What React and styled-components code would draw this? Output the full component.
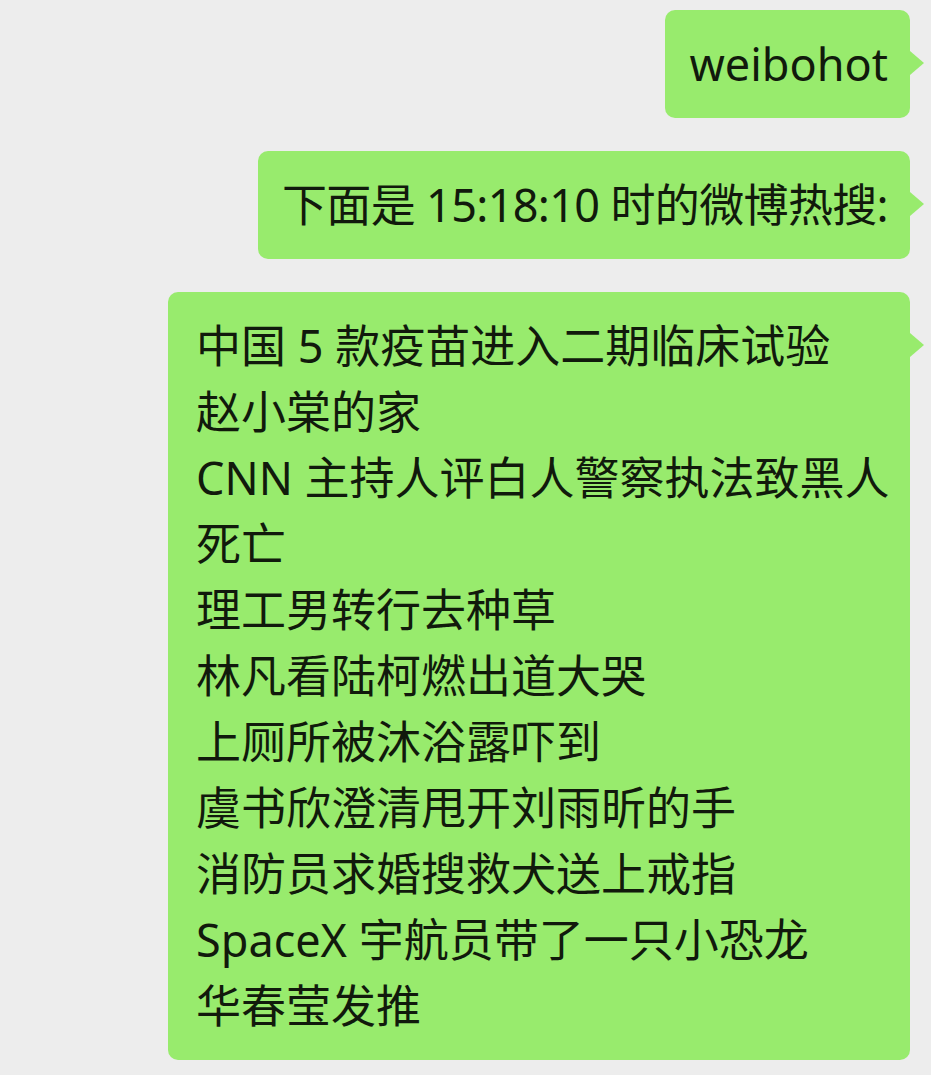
import React from 'react';
import styled, {createGlobalStyle} from "styled-components";

const messages = [
    {id: 1, lines: ['weibohot']},
    {id: 2, tight: true, lines: ['下面是 15:18:10 时的微博热搜:']},
    {
        id: 3,
        wide: true,
        lines: [
            '中国 5 款疫苗进入二期临床试验',
            '赵小棠的家',
            'CNN 主持人评白人警察执法致黑人死亡',
            '理工男转行去种草',
            '林凡看陆柯燃出道大哭',
            '上厕所被沐浴露吓到',
            '虞书欣澄清甩开刘雨昕的手',
            '消防员求婚搜救犬送上戒指',
            'SpaceX 宇航员带了一只小恐龙',
            '华春莹发推',
        ],
    },
];

function App() {
    return (
        <>
            <GlobalStyle/>
            <Chat>
                {messages.map(msg => (
                    <Row key={msg.id}>
                        <Bubble $wide={msg.wide} $tight={msg.tight}>
                            {msg.lines.map((line, i) => (
                                <Line key={i}>{line}</Line>
                            ))}
                        </Bubble>
                    </Row>
                ))}
            </Chat>
        </>
    );
}

const GlobalStyle = createGlobalStyle`
  html, body {
    margin: 0;
    padding: 0;
    background: #ededed;
  }
  body {
    font-family: "Noto Sans", "Noto Sans CJK SC", sans-serif;
  }
`

const Chat = styled.div`
  display: flex;
  flex-direction: column;
  align-items: flex-end;
  gap: 33px;
  padding: 10px 21px 16px 0;
  min-height: 1075px;
  box-sizing: border-box;
`

const Row = styled.div`
  display: flex;
  justify-content: flex-end;
  width: 100%;
`

const Bubble = styled.div`
  position: relative;
  box-sizing: border-box;
  width: ${props => props.$wide ? '742px' : 'auto'};
  padding: ${props => props.$wide ? '21px 14px 21px 28px' : '21px 22px 21px 24px'};
  background: #98eb6d;
  border-radius: 10px;
  color: #111a0c;
  font-size: 45px;
  line-height: 66px;
  letter-spacing: ${props => props.$tight ? '-0.65px' : 'normal'};

  &::after {
    content: '';
    position: absolute;
    top: 41px;
    right: -14px;
    border-left: 14px solid #98eb6d;
    border-top: 12px solid transparent;
    border-bottom: 12px solid transparent;
  }
`

const Line = styled.div`
  white-space: normal;
`

export default App;
